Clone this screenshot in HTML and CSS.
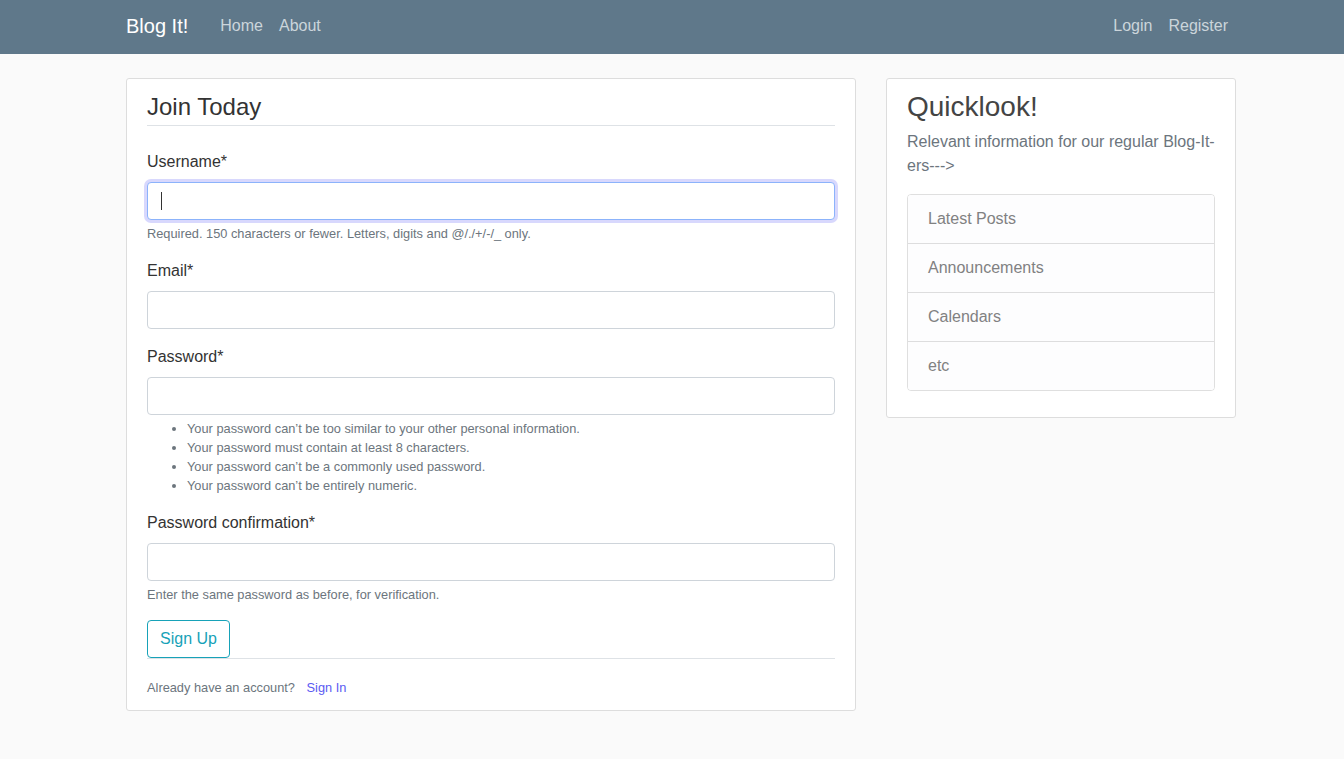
FILE: index.html
```html
<!DOCTYPE html>
<html lang="en">
<head>
<meta charset="utf-8">
<title>Blog It! - Register</title>
<link rel="stylesheet" href="styles.css">
</head>
<body>
<header class="site-header">
  <nav class="navbar">
    <div class="nav-container">
      <a class="brand" href="#">Blog It!</a>
      <div class="nav-left">
        <a class="nav-link" href="#">Home</a>
        <a class="nav-link" href="#">About</a>
      </div>
      <div class="nav-right">
        <a class="nav-link" href="#">Login</a>
        <a class="nav-link" href="#">Register</a>
      </div>
    </div>
  </nav>
</header>
<main class="container">
  <div class="col-main">
    <div class="content-section">
      <form class="form">
        <div class="legend">Join Today</div>
        <div class="form-group">
          <label class="label">Username*</label>
          <div class="input focused"><span class="caret"></span></div>
          <small class="help">Required. 150 characters or fewer. Letters, digits and @/./+/-/_ only.</small>
        </div>
        <div class="form-group">
          <label class="label">Email*</label>
          <div class="input"></div>
        </div>
        <div class="form-group">
          <label class="label">Password*</label>
          <div class="input"></div>
          <small class="help">
            <ul class="help-list">
              <li>Your password can’t be too similar to your other personal information.</li>
              <li>Your password must contain at least 8 characters.</li>
              <li>Your password can’t be a commonly used password.</li>
              <li>Your password can’t be entirely numeric.</li>
            </ul>
          </small>
        </div>
        <div class="form-group">
          <label class="label">Password confirmation*</label>
          <div class="input"></div>
          <small class="help">Enter the same password as before, for verification.</small>
        </div>
        <div class="btn-row">
          <button class="btn-outline-info" type="button">Sign Up</button>
        </div>
      </form>
      <div class="account-row">
        <small class="muted">Already have an account? <a class="signin" href="#">Sign In</a></small>
      </div>
    </div>
  </div>
  <div class="col-side">
    <div class="content-section">
      <h3 class="side-title">Quicklook!</h3>
      <p class="side-text">Relevant information for our regular Blog-It-ers---&gt;</p>
      <ul class="list-group">
        <li class="list-item">Latest Posts</li>
        <li class="list-item">Announcements</li>
        <li class="list-item">Calendars</li>
        <li class="list-item">etc</li>
      </ul>
      <div class="spacer"></div>
    </div>
  </div>
</main>
</body>
</html>
```
FILE: styles.css
```css
* { box-sizing: border-box; }
html, body { margin: 0; padding: 0; }
body {
  background: #fafafa;
  color: #333333;
  font-family: "Liberation Sans", Arial, Helvetica, sans-serif;
  font-size: 16px;
  line-height: 1.5;
}
a { text-decoration: none; }

.site-header { height: 54px; background: #5f788a; }
.navbar { height: 54px; }
.nav-container {
  width: 1110px;
  margin-left: 126px;
  height: 54px;
  display: flex;
  align-items: center;
}
.brand {
  color: #ffffff;
  font-size: 20px;
  line-height: 30px;
  margin-right: 24px;
  padding-bottom: 2px;
}
.nav-left, .nav-right { display: flex; align-items: center; }
.nav-right { margin-left: auto; }
.nav-link {
  color: #cbd5db;
  font-size: 16px;
  line-height: 24px;
  padding: 8px 8px 10px;
}

.container {
  width: 1110px;
  margin-left: 126px;
  margin-top: 24px;
  display: flex;
  align-items: flex-start;
  gap: 30px;
}
.col-main { width: 730px; flex: none; }
.col-side { width: 350px; flex: none; }

.content-section {
  background: #ffffff;
  padding: 10px 20px;
  border: 1px solid #dddddd;
  border-radius: 3px;
}

.legend {
  font-size: 24px;
  line-height: 36px;
  border-bottom: 1px solid #dee2e6;
  margin-bottom: 24px;
}
.form-group { margin-bottom: 16px; }
.label { display: block; margin-bottom: 8px; line-height: 24px; }
.input {
  height: 38px;
  border: 1px solid #ced4da;
  border-radius: 4px;
  background: #fff;
  display: flex;
  align-items: center;
  padding-left: 13px;
}
.input.focused {
  border-color: #8cb3fb;
  box-shadow: 0 0 0 3px rgba(60, 60, 245, 0.2);
}
.caret { width: 1px; height: 18px; background: #333; }
.help {
  display: block;
  margin-top: 4px;
  font-size: 12.8px;
  line-height: 19px;
  color: #6c757d;
}
.help-list { margin: 0 0 16px; padding-left: 40px; }

.btn-row { margin: 0; }
.btn-outline-info {
  font-family: inherit;
  font-size: 16px;
  line-height: 24px;
  padding: 6px 12px;
  height: 38px;
  color: #17a2b8;
  background: transparent;
  border: 1px solid #17a2b8;
  border-radius: 4px;
}
.account-row { border-top: 1px solid #dee2e6; padding-top: 16px; line-height: 24px; }
.muted { color: #6c757d; font-size: 12.8px; }
.signin { color: #5a5af2; margin-left: 8px; }

.side-title {
  margin: 0 0 6px;
  padding-top: 1px;
  font-size: 28px;
  line-height: 34px;
  font-weight: 400;
  color: #444444;
}
.side-text { margin: 0 0 16px; color: #6c757d; }
.list-group {
  list-style: none;
  margin: 0;
  padding: 0;
  border: 1px solid rgba(0,0,0,0.125);
  border-radius: 4px;
  overflow: hidden;
}
.list-item {
  padding: 12px 20px;
  background: #fdfdfe;
  color: #818182;
  line-height: 24px;
  border-top: 1px solid rgba(0,0,0,0.125);
}
.list-item:first-child { border-top: 0; }
.spacer { height: 16px; }
```
